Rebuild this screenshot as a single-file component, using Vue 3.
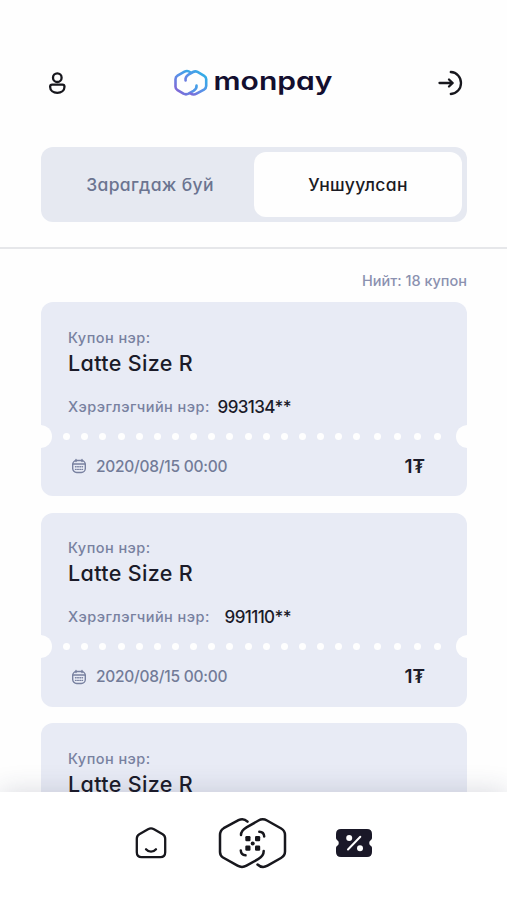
<template>
  <div class="screen">
    <header class="header">
      <svg class="user-icon" viewBox="0 0 20 26" width="20" height="26">
        <circle cx="10.3" cy="7.7" r="4.3" />
        <path d="M5.2 14.6h10.2c1.4 0 2.1.9 2.1 2.2 0 3.6-3.2 6-7.2 6s-7.2-2.4-7.2-6c0-1.3.7-2.2 2.1-2.2z" />
      </svg>
      <svg class="logo" viewBox="0 0 160 36" width="160" height="36">
        <defs>
          <linearGradient id="brand" x1="0" y1="1" x2="1" y2="0">
            <stop offset="0" stop-color="#8a5bd0" />
            <stop offset="0.45" stop-color="#5b8fe8" />
            <stop offset="1" stop-color="#27b5e6" />
          </linearGradient>
        </defs>
        <g class="logo-mark">
          <path d="M17.5 7.4Q14.500 5 11.500 6.700L4.500 10.700Q2.500 11.900 2.500 14.200V21.800Q2.500 24 4.500 25.200L10.500 28.700Q13 30 15.500 28.700L20.500 25.900Q24 23.800 23.500 20.500" />
          <path d="M17.5 28.5Q20.500 30.400 23.500 28.700L31 24.600Q33.200 23.300 33.200 21.100V14.200Q33.200 12 31.200 10.800L24.500 6.900Q22.300 5.700 20 7L15.500 9.600Q12 11.800 12.600 15.500" />
        </g>
        <text x="40.5" y="25.2" textLength="119" lengthAdjust="spacingAndGlyphs">monpay</text>
      </svg>
      <svg class="exit-icon" viewBox="0 0 28 28" width="28" height="28">
        <path d="M3.5 14h13M13 10.5l3.7 3.5-3.7 3.5" />
        <path d="M14.8 3c6 .3 10.200 5.200 10.200 11s-4.200 10.700-10.200 11" />
      </svg>
    </header>

    <div class="tabs">
      <button
        v-for="tab in tabs"
        :key="tab.id"
        class="tab"
        :class="{ active: tab.id == current }"
        @click="current = tab.id"
      >
        {{ tab.title }}
      </button>
    </div>

    <main class="content">
      <p class="total">Нийт: 18 купон</p>
      <div class="card" v-for="(coupon, index) in coupons" :key="index">
        <p class="label">Купон нэр:</p>
        <h2 class="name">{{ coupon.name }}</h2>
        <div class="user-row">
          <span class="label">Хэрэглэгчийн нэр:</span>
          <span class="phone">{{ coupon.phone }}</span>
        </div>
        <div class="tear">
          <i class="notch"></i>
          <i class="dot" v-for="n in 21" :key="n"></i>
          <i class="notch right"></i>
        </div>
        <div class="card-bottom">
          <svg class="calendar" viewBox="0 0 16 16" width="16" height="16">
            <rect x="1.7" y="2.5" width="12.6" height="12" rx="4" />
            <path d="M2 6h12M5 1.500v2M11 1.500v2" />
            <path class="days" d="M4.500 8.700h7M4.500 11.400h7" />
          </svg>
          <span class="date">{{ coupon.date }}</span>
          <span class="price">{{ coupon.price }}₮</span>
        </div>
      </div>
    </main>

    <nav class="nav">
      <svg class="home" viewBox="0 0 32 32" width="32" height="32">
        <path d="M13 2.200 4.300 7.300Q1.800 8.800 1.800 11.700V25.300Q1.800 30.200 6.700 30.200H25.300Q30.200 30.200 30.200 25.300V11.700Q30.200 8.800 27.700 7.300L19 2.200Q16 .6 13 2.200Z" />
        <path d="M11 22.300c2.700 3.200 7.300 3.200 10 0" />
      </svg>
      <svg class="scan" viewBox="0 0 70 52" width="70" height="52">
        <path d="M30.500 4.700Q26.500 .6 21.500 3.200L6.700 11.200Q3 13.500 3 18V35Q3 38.500 6 40.500L20.500 48.700Q25 51.200 29.500 48.700L41.500 41.900Q46.700 38.800 46.700 34" />
        <path d="M40.500 47.500Q45 51.700 50.500 48.700L64 41Q68 38.700 68 34.500V18Q68 13.700 64.200 11.500L50 3.500Q45.700 1.100 41.500 3.500L29.500 10.400Q24 13.700 24 18" />
        <path d="M42.300 14.800Q47 15 47.200 19.500M23.800 33.500Q24 38 28.500 38.300" />
        <g class="code">
          <rect x="28.3" y="19" width="5.2" height="5.2" rx="1.2" />
          <rect x="38" y="19" width="5.2" height="5.2" rx="1.2" />
          <rect x="28.3" y="28.6" width="5.2" height="5.2" rx="1.2" />
          <rect x="38" y="28.6" width="5.2" height="5.2" rx="1.2" />
          <circle cx="35.7" cy="26.4" r="2" />
        </g>
      </svg>
      <svg class="coupon" viewBox="0 0 36 28" width="36" height="28">
        <path d="M5 0H31Q36 0 36 5V9Q36 10.200 35 10.900Q33.200 12 33.200 14T35 17.100Q36 17.800 36 19V23Q36 28 31 28H5Q0 28 0 23V19Q0 17.800 1 17.100Q2.800 16 2.800 14T1 10.900Q0 10.200 0 9V5Q0 0 5 0Z" />
        <path class="percent" d="M12 20.500 24.300 7.800" />
        <circle cx="13.2" cy="9" r="3" />
        <circle cx="24" cy="19.3" r="3" />
      </svg>
    </nav>
  </div>
</template>

<script setup>
import { ref } from "vue";

const current = ref("used");
const tabs = [
  { id: "spent", title: "Зарагдаж буй" },
  { id: "used", title: "Уншуулсан" },
];
const coupons = [
  { name: "Latte Size R", phone: "993134**", date: "2020/08/15 00:00", price: 1 },
  { name: "Latte Size R", phone: "991110**", date: "2020/08/15 00:00", price: 1 },
  { name: "Latte Size R", phone: "991110**", date: "2020/08/15 00:00", price: 1 },
];
</script>

<style>
body {
  margin: 0;
  background: #fefefe;
}
</style>

<style scoped>
.screen {
  display: flex;
  flex-direction: column;
  box-sizing: border-box;
  width: 507px;
  height: 900px;
  overflow: hidden;
  background: #fefefe;
  color: #1b1b29;
  font-family: Inter, "Open Sans", sans-serif;
  font-feature-settings: "cv11";
  font-weight: 500;
}
p,
h2 {
  margin: 0;
}
svg {
  display: block;
  flex: none;
  fill: none;
  stroke: #17171d;
  stroke-width: 2.3;
  stroke-linecap: round;
  stroke-linejoin: round;
}
.header {
  display: flex;
  flex: none;
  align-items: center;
  justify-content: space-between;
  height: 129px;
  padding: 18px 43px 0 47px;
}
.logo {
  margin-left: 2px;
  overflow: visible;
}
.logo-mark {
  stroke: url(#brand);
  stroke-width: 2.6;
}
.logo text {
  fill: #130f2f;
  stroke: none;
  font-size: 25px;
  font-weight: 600;
}
.tabs {
  display: flex;
  flex: none;
  box-sizing: border-box;
  height: 75px;
  margin: 0 40px 0 41px;
  padding: 5px;
  border-radius: 12px;
  background: #e6e9f1;
}
.tab {
  flex: 1 1 0;
  width: 0;
  padding: 0;
  border: 0;
  border-radius: 12px;
  background: none;
  color: #6b7490;
  font: inherit;
  font-feature-settings: inherit;
  font-size: 17.5px;
  font-weight: 550;
  letter-spacing: 0.35px;
}
.tab.active {
  background: #fefefe;
  color: #1b1b24;
}
.content {
  flex: 1;
  min-height: 0;
  margin-top: 25px;
  padding: 22px 40px 0 41px;
  border-top: 2px solid #e6e7ea;
  overflow: hidden;
}
.total {
  height: 31px;
  color: #8b91b0;
  font-size: 14.5px;
  line-height: 20px;
  text-align: right;
}
.card {
  box-sizing: border-box;
  height: 194px;
  margin-bottom: 16.7px;
  padding-top: 25.5px;
  border-radius: 12px;
  background: #e8ebf5;
  overflow: hidden;
}
.label {
  margin-left: 27px;
  color: #7881a0;
  font-size: 14.5px;
  line-height: 20px;
  letter-spacing: 0.45px;
}
.name {
  margin-left: 27px;
  font-size: 21.5px;
  font-weight: 550;
  line-height: 31px;
  letter-spacing: 0.35px;
}
.user-row {
  display: flex;
  align-items: center;
  justify-content: space-between;
  width: 250px;
  height: 24px;
  margin-top: 16px;
}
.phone {
  font-size: 17px;
  font-weight: 550;
  letter-spacing: -0.6px;
}
.tear {
  display: flex;
  align-items: center;
  gap: 11.15px;
  height: 24px;
  margin: 5.5px -12px 0;
}
.notch {
  flex: none;
  width: 23px;
  height: 23px;
  border-radius: 50%;
  background: #fefefe;
}
.notch.right {
  margin-left: auto;
}
.dot {
  flex: none;
  width: 7px;
  height: 7px;
  border-radius: 50%;
  background: #fefefe;
}
.dot:nth-last-child(-n + 5) {
  margin-left: 2px;
}
.card-bottom {
  display: flex;
  align-items: center;
  height: 34px;
  padding: 1px 42px 0 30px;
}
.calendar {
  stroke: #7881a0;
  stroke-width: 1.4;
}
.days {
  stroke-dasharray: 0.6 1.6;
}
.date {
  margin-left: 9px;
  color: #727b98;
  font-size: 15.5px;
  letter-spacing: -0.25px;
}
.price {
  margin-left: auto;
  font-size: 19px;
  font-weight: 600;
}
.nav {
  position: relative;
  display: flex;
  flex: none;
  align-items: center;
  box-sizing: border-box;
  height: 108px;
  padding: 0 0 6px 135px;
  background: #fff;
  box-shadow: 0 0 26px rgba(40, 45, 75, 0.18);
}
.scan {
  margin-left: 50px;
  stroke-width: 2.5;
}
.code {
  fill: #17171d;
  stroke: none;
}
.coupon {
  margin-left: 49px;
  fill: #1a1828;
  stroke: none;
}
.coupon circle {
  fill: #fff;
}
.coupon .percent {
  stroke: #fff;
  stroke-width: 2;
}
</style>
